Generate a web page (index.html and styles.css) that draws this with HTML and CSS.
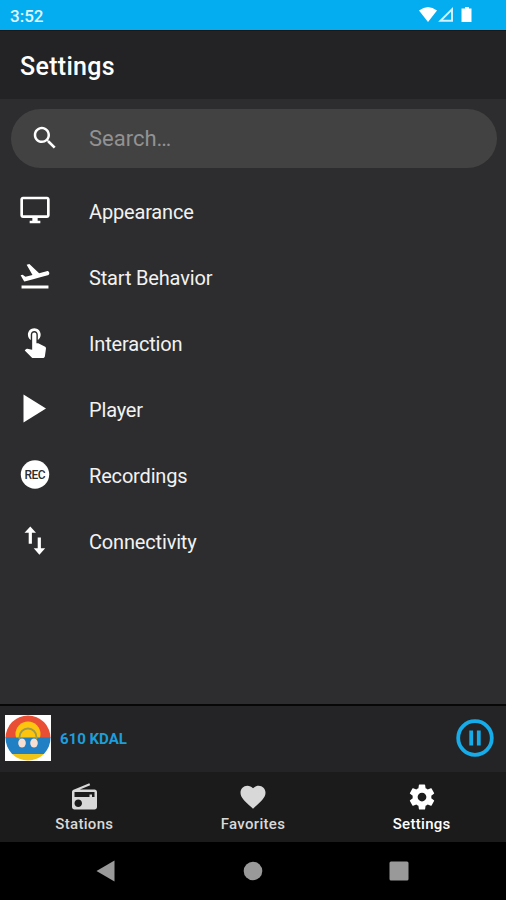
FILE: index.html
```html
<!DOCTYPE html>
<html lang="en">
<head>
  <meta charset="UTF-8">
  <meta name="viewport" content="width=device-width, initial-scale=1.0">
  <title>Settings</title>
  <link rel="stylesheet" href="styles.css">
</head>
<body>
  <div class="status-bar">
    <span class="clock">3:52</span>
    <svg class="status-icons" width="56" height="18" viewBox="0 0 56 18">
      <path d="M0 4.5Q9-2.5 18 4.500L9 16z"/>
      <path class="signal" d="M21.500 14.800H33V3.300z"/>
      <path d="M46 1h4v1.500h2.500V16h-10V2.500H46z"/>
    </svg>
  </div>

  <header class="app-header">
    <h1>Settings</h1>
  </header>

  <main class="content">
    <div class="search">
      <svg class="search-icon" width="30" height="30" viewBox="0 0 24 24"><path d="M15.5 14h-.79l-.28-.27C15.41 12.59 16 11.11 16 9.5 16 5.91 13.09 3 9.5 3S3 5.91 3 9.5 5.91 16 9.5 16c1.61 0 3.09-.59 4.23-1.57l.27.28v.79l5 4.99L20.49 19l-4.99-5zm-6 0C7.01 14 5 11.99 5 9.5S7.01 5 9.5 5 14 7.01 14 9.5 11.99 14 9.5 14z"/></svg>
      <span>Search…</span>
    </div>

    <ul class="menu">
      <li>
        <span class="icon"><svg width="32" height="32" viewBox="0 0 24 24"><path d="M21 2H3c-1.1 0-2 .9-2 2v12c0 1.1.9 2 2 2h7v2H8v2h8v-2h-2v-2h7c1.1 0 2-.9 2-2V4c0-1.1-.9-2-2-2zm0 14H3V4h18v12z"/></svg></span>
        <span class="label">Appearance</span>
      </li>
      <li>
        <span class="icon"><svg width="34" height="34" viewBox="0 0 24 24"><path d="M2.500 18.700h19v2.200h-19zM22.070 9.640c-.21-.8-1.04-1.28-1.84-1.06L14.92 10l-6.9-6.43-1.93.51 4.14 7.17-4.97 1.33-1.97-1.54-1.45.39 1.82 3.16.77 1.33 1.6-.43 5.31-1.42 4.35-1.16L21 11.49c.81-.23 1.28-1.05 1.07-1.85z"/></svg></span>
        <span class="label">Start Behavior</span>
      </li>
      <li>
        <span class="icon touch"><svg width="34" height="34" viewBox="0 0 24 24"><path d="M9 11.24V7.5C9 6.12 10.12 5 11.5 5S14 6.12 14 7.5v3.74c1.21-.81 2-2.18 2-3.74C16 5.01 13.99 3 11.5 3S7 5.01 7 7.5c0 1.56.79 2.93 2 3.74zm9.84 4.63l-4.54-2.26c-.17-.07-.35-.11-.54-.11H13v-6c0-.83-.67-1.5-1.5-1.5S10 6.67 10 7.5v10.74l-3.43-.72c-.08-.01-.15-.03-.24-.03-.31 0-.59.13-.79.33l-.79.8 4.94 4.94c.27.27.65.44 1.06.44h6.79c.75 0 1.33-.55 1.44-1.28l.75-5.27c.01-.07.02-.14.02-.2 0-.62-.38-1.16-.91-1.38z"/></svg></span>
        <span class="label">Interaction</span>
      </li>
      <li>
        <span class="icon"><svg width="32" height="32" viewBox="0 0 32 32"><path d="M4.500 2.500v28L27 16.500z"/></svg></span>
        <span class="label">Player</span>
      </li>
      <li>
        <span class="icon"><svg width="32" height="32" viewBox="0 0 32 32"><circle cx="16" cy="16.500" r="14.200"/><text class="rec" x="16" y="21" text-anchor="middle" textLength="21" lengthAdjust="spacing">REC</text></svg></span>
        <span class="label">Recordings</span>
      </li>
      <li>
        <span class="icon"><svg width="32" height="32" viewBox="0 0 32 32"><path d="M11.300 2.500L5.500 8.700H9.700V19.700H12.900V8.700H17zM21.900 24.300V13.500H18.700V24.300H14.700L20.400 30.700L26.200 24.300z"/></svg></span>
        <span class="label">Connectivity</span>
      </li>
    </ul>
  </main>

  <div class="player">
    <svg class="cover" width="46" height="46" viewBox="0 0 46 46">
      <clipPath id="disc"><circle cx="23" cy="23" r="22.5"/></clipPath>
      <path fill="#fff" d="M0 0h46v46H0z"/>
      <g clip-path="url(#disc)">
        <path fill="#e94f35" d="M0 0h46v23H0z"/>
        <circle fill="#fdc50e" cx="23" cy="19" r="12.5"/>
        <path fill="#217fc3" d="M0 22.500h46V39H0z"/>
        <path fill="#efc51a" d="M0 39h46v7H0z"/>
      </g>
      <path fill="none" stroke="#a19a48" stroke-width="1.800" d="M14.500 24v-2a8.500 8.500 0 0 1 17 0v2"/>
      <ellipse fill="#f6dfd2" cx="17" cy="28" rx="3.800" ry="4.500"/>
      <ellipse fill="#f6dfd2" cx="29" cy="28" rx="3.800" ry="4.500"/>
    </svg>
    <span class="station">610 KDAL</span>
    <svg class="pause" width="38" height="38" viewBox="0 0 38 38">
      <circle cx="19" cy="19" r="16.800"/>
      <path d="M15.200 11.500v15M22.800 11.500v15"/>
    </svg>
  </div>

  <nav class="tabs">
    <a class="tab">
      <svg width="31" height="30" viewBox="0 0 24 24"><path d="M3.240 6.150C2.510 6.430 2 7.170 2 8v12c0 1.100.890 2 2 2h16c1.110 0 2-.900 2-2V8c0-1.110-.900-2-2-2H8.300l8.260-3.340L15.880 1 3.240 6.150zM7 20c-1.660 0-3-1.340-3-3s1.340-3 3-3 3 1.340 3 3-1.340 3-3 3zm13-8h-2v-2h-2v2H4V8h16v4z"/></svg>
      <span>Stations</span>
    </a>
    <a class="tab">
      <svg width="30" height="30" viewBox="0 0 24 24"><path d="M12 21.350l-1.450-1.320C5.400 15.360 2 12.280 2 8.500 2 5.420 4.420 3 7.500 3c1.740 0 3.410.810 4.500 2.090C13.090 3.810 14.760 3 16.500 3 19.580 3 22 5.420 22 8.500c0 3.780-3.400 6.860-8.550 11.540L12 21.350z"/></svg>
      <span>Favorites</span>
    </a>
    <a class="tab active">
      <svg width="30" height="30" viewBox="0 0 24 24"><path d="M19.430 12.980c.040-.320.070-.640.070-.980s-.030-.660-.070-.980l2.110-1.650c.190-.150.240-.420.120-.640l-2-3.460c-.120-.220-.390-.300-.610-.220l-2.490 1c-.520-.400-1.080-.730-1.690-.980l-.380-2.650C14.460 2.180 14.250 2 14 2h-4c-.250 0-.460.180-.490.420l-.380 2.650c-.610.250-1.170.590-1.690.980l-2.490-1c-.230-.090-.490 0-.610.220l-2 3.460c-.130.220-.070.490.120.640l2.110 1.650c-.040.320-.070.650-.070.980s.030.660.070.980l-2.110 1.650c-.190.150-.240.420-.120.640l2 3.460c.120.220.390.300.610.220l2.490-1c.520.400 1.080.730 1.690.980l.380 2.650c.030.240.240.420.490.420h4c.250 0 .460-.180.490-.420l.380-2.650c.610-.250 1.170-.590 1.690-.980l2.490 1c.230.090.490 0 .610-.220l2-3.460c.120-.220.070-.490-.120-.640l-2.110-1.650zM12 15.500c-1.930 0-3.500-1.570-3.500-3.500s1.570-3.500 3.500-3.500 3.500 1.570 3.500 3.500-1.570 3.500-3.500 3.500z"/></svg>
      <span>Settings</span>
    </a>
  </nav>

  <div class="system-nav">
    <svg width="20" height="22" viewBox="0 0 20 22"><path d="M18.500 0.500v21L0.500 11z"/></svg>
    <svg width="20" height="20" viewBox="0 0 20 20"><circle cx="10" cy="10" r="9.300"/></svg>
    <svg width="20" height="20" viewBox="0 0 20 20"><rect x="0.500" y="0.500" width="19" height="19" rx="1.500"/></svg>
  </div>
</body>
</html>
```

FILE: styles.css
```css
* {
  box-sizing: border-box;
}
body {
  margin: 0;
  height: 900px;
  display: flex;
  flex-direction: column;
  overflow: hidden;
  background-color: #2d2d2f;
  color: #f2f2f2;
  font-family: Roboto, sans-serif;
}
svg {
  display: block;
  flex: none;
  fill: currentColor;
}
.status-bar {
  height: 30px;
  display: flex;
  align-items: center;
  justify-content: space-between;
  padding: 0 31px 0 10px;
  background-color: #03adf0;
  color: #fff;
}
.clock {
  padding-top: 1px;
  font-size: 17px;
  font-weight: 500;
  color: #e0f5fd;
}
.signal {
  fill: none;
  stroke: #d3f1fc;
  stroke-width: 2;
}
.app-header {
  height: 69px;
  display: flex;
  align-items: center;
  padding: 2px 20px 0;
  background-color: #232325;
  border-top: 1px solid #171719;
}
h1 {
  margin: 0;
  font-size: 25px;
  font-weight: 500;
  letter-spacing: 0.3px;
  color: #fff;
}
.content {
  flex: 1;
  padding: 10px 9px 0 11px;
}
.search {
  height: 59px;
  display: flex;
  align-items: center;
  gap: 29px;
  padding-left: 19px;
  border-radius: 30px;
  background-color: #424242;
  color: #929292;
  font-size: 22px;
}
.search-icon {
  color: #fff;
  margin-top: -2px;
}
.menu {
  list-style: none;
  margin: 9px 0 0;
  padding: 0;
}
.menu li {
  height: 66px;
  display: flex;
  align-items: center;
  gap: 36px;
}
.icon {
  width: 42px;
  display: flex;
  justify-content: center;
  padding-left: 6px;
  color: #fff;
}
.touch {
  padding-bottom: 2px;
}
.label {
  padding-top: 3px;
  font-size: 20px;
  letter-spacing: -0.17px;
}
.rec {
  fill: #2d2d2f;
  font-size: 12px;
  font-weight: 500;
}
.player {
  height: 68px;
  display: flex;
  align-items: center;
  padding: 0 12px 2px 5px;
  background-color: #242426;
  border-top: 2px solid #070707;
}
.station {
  flex: 1;
  padding: 1px 0 0 9px;
  color: #1d9edb;
  font-size: 15px;
  font-weight: 700;
}
.pause {
  fill: none;
  stroke: #16abe9;
  stroke-width: 3.8;
}
.tabs {
  height: 70px;
  display: grid;
  grid-template-columns: repeat(3, 1fr);
  background-color: #1b1b1b;
}
.tab {
  display: flex;
  flex-direction: column;
  align-items: center;
  padding-top: 10px;
  color: #d8d8d8;
  font-size: 15px;
  font-weight: 500;
  line-height: 18px;
  letter-spacing: 0.3px;
}
.tab span {
  margin-top: 3px;
}
.tab.active {
  color: #fff;
}
.system-nav {
  height: 58px;
  display: flex;
  align-items: center;
  justify-content: space-between;
  padding: 0 97px 0 96px;
  background-color: #000;
  color: #999;
}
```
